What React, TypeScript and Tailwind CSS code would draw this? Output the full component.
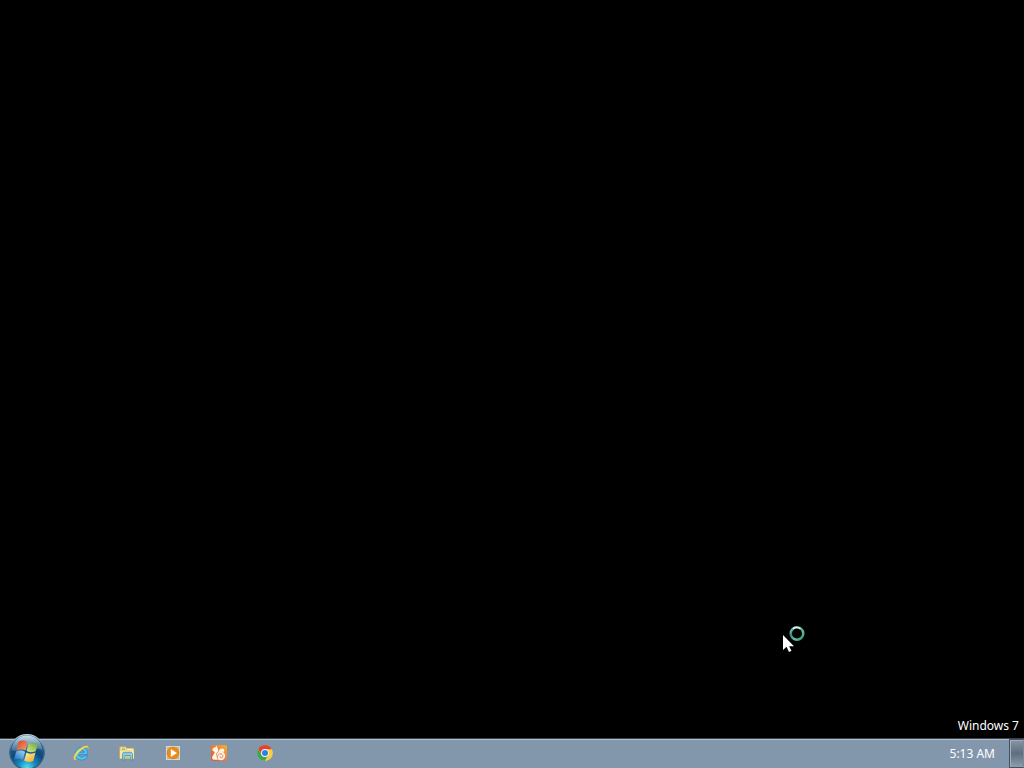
import type { ReactNode } from "react";

function StartOrb() {
  return (
    <svg viewBox="0 0 36 36" className="size-9" aria-hidden="true">
      <defs>
        <radialGradient id="orb" cx="50%" cy="95%" r="85%">
          <stop offset="0" stopColor="#4fe0f4" />
          <stop offset="0.3" stopColor="#1888bd" />
          <stop offset="0.6" stopColor="#10497c" />
          <stop offset="1" stopColor="#35648f" />
        </radialGradient>
        <linearGradient id="gloss" x1="0" y1="0" x2="0" y2="1">
          <stop offset="0" stopColor="#dcebf4" stopOpacity="0.9" />
          <stop offset="1" stopColor="#8fb4cd" stopOpacity="0.3" />
        </linearGradient>
        <linearGradient id="rim" x1="0" y1="0" x2="0" y2="1">
          <stop offset="0" stopColor="#b9cedb" />
          <stop offset="0.5" stopColor="#3d6486" />
          <stop offset="1" stopColor="#285f83" />
        </linearGradient>
        <linearGradient id="red" x1="0" y1="0" x2="1" y2="1">
          <stop offset="0" stopColor="#d9421c" />
          <stop offset="1" stopColor="#f5a06a" />
        </linearGradient>
        <linearGradient id="green" x1="1" y1="0" x2="0" y2="1">
          <stop offset="0" stopColor="#69a92f" />
          <stop offset="1" stopColor="#d5e88a" />
        </linearGradient>
        <linearGradient id="blue" x1="0" y1="1" x2="1" y2="0">
          <stop offset="0" stopColor="#1d69b8" />
          <stop offset="1" stopColor="#a2ddf5" />
        </linearGradient>
        <linearGradient id="yellow" x1="1" y1="1" x2="0" y2="0">
          <stop offset="0" stopColor="#f2a51e" />
          <stop offset="1" stopColor="#fff3a0" />
        </linearGradient>
      </defs>
      <circle cx="18" cy="18" r="17.3" fill="url(#orb)" stroke="url(#rim)" strokeWidth="1.2" />
      <path d="M2.5 16C3.2 7.5 10 1.5 18 1.5s14.800 6 15.500 14.500C24 12 14 20 2.500 16Z" fill="url(#gloss)" />
      <path d="M9.500 7.800c3.300-1.700 6.300-1.600 8.900.1l-1.900 8.500c-2.900-1.600-5.700-1.600-9-.1Z" fill="url(#red)" />
      <path d="M19.700 8.700c3.200 1.700 6 1.700 9.400.1l-2.300 8.500c-3.300 1.500-6.100 1.400-9.100-.2Z" fill="url(#green)" />
      <path d="M7.100 17.600c3.300-1.500 6-1.400 9 .1l-2.200 8.100c-2.700-1.500-5.500-1.600-8.900 0Z" fill="url(#blue)" />
      <path d="M17.400 18.500c3.100 1.600 5.900 1.700 9.100.1l-2.200 8.300c-3.300 1.500-6.100 1.400-9.100-.3Z" fill="url(#yellow)" />
    </svg>
  );
}

function ExplorerIcon() {
  return (
    <svg viewBox="0 0 16 16" className="size-4" aria-hidden="true">
      <path d="M14.700 9.400H5.600c.2 1.800 1.300 2.700 3 2.700 1.200 0 2-.4 2.600-1.300h3.200c-.8 2.700-2.900 4.200-5.900 4.200-3.900 0-6.300-2.400-6.300-6.200S4.700 2.500 8.600 2.500s6.300 2.500 6.100 6.900ZM5.700 7.300h5.600c-.2-1.400-1.200-2.200-2.700-2.200s-2.600.8-2.900 2.200Z" fill="#52c4f5" stroke="#237fbd" strokeWidth="0.6" />
      <path d="M3.200 14.800C-.2 16-.2 11.600 3.200 7.300 7 2.600 12.700-.3 14.800 1c1 .7.8 2 .3 3.300 0-1.600-.6-2.200-2.300-1.700C9.700 3.600 4.900 7.800 3 11.200c-1 1.900-.9 3.200.9 2.700Z" fill="#f3df59" stroke="#b9a93f" strokeWidth="0.3" />
    </svg>
  );
}

function FolderIcon() {
  return (
    <svg viewBox="0 0 16 16" className="size-4" aria-hidden="true">
      <path d="M.5 13.500v-11l1-1h5l1 1.500h7.500v10.500Z" fill="#e7cf79" stroke="#baa45c" strokeWidth="0.6" />
      <path d="M2 3.500h5M8 4.500h6" stroke="#fff8cf" />
      <path d="M3 4h3" stroke="#66a958" />
      <path d="M1 5.500h14v8H1Z" fill="#f6e7a4" />
      <path d="M3.500 15V9.500c0-1.500.7-2.200 2-2.200h6c1.300 0 2 .7 2 2.200V15h-2.300v-4.500H5.800V15Z" fill="#8dcbea" stroke="#3f86a8" strokeWidth="0.7" />
      <path d="M6.500 11.300h4V14h-4Z" fill="#c9c06e" />
    </svg>
  );
}

function MediaIcon() {
  return (
    <svg viewBox="0 0 16 16" className="size-4" aria-hidden="true">
      <path d="M1 1h14v14H1Z" fill="#c4dfe8" />
      <path d="M2 2h12v12H2Z" fill="#e6b066" />
      <circle cx="8" cy="8" r="5.800" fill="#ed8b17" stroke="#d8760f" strokeWidth="0.7" />
      <path d="m5.800 4 6.200 4-6.200 4Z" fill="#fff" />
    </svg>
  );
}

function SquirrelIcon() {
  return (
    <svg viewBox="0 0 16 16" className="size-4" aria-hidden="true">
      <defs>
        <linearGradient id="squirrel" x1="0" y1="1" x2="1" y2="0">
          <stop offset="0" stopColor="#e2552a" />
          <stop offset="0.5" stopColor="#ee7a3a" />
          <stop offset="1" stopColor="#f9b32c" />
        </linearGradient>
      </defs>
      <rect width="16" height="16" rx="2" fill="url(#squirrel)" />
      <path d="M1.300 5.200C1.500 3.400 2.800 2.300 4.500 2.300L5.800.8l.7 2.400c1.100 1.300.9 2.900-.1 4.100C5.400 8.500 4.700 9.300 5 10.500L7 14.800H3.200c-1.800 0-2.700-1.800-1.800-3.500L3.800 7.700 3 6.500Z" fill="#fff5e9" />
      <circle cx="9.800" cy="10.800" r="4.400" fill="#fff5e9" />
      <path d="M7.500 8c0-3 1.700-4.700 3.800-4.500 1.700.2 2.500 1.800 1.700 3-.5.800-1.500.7-1.900.1-.7 1 .3 1.900 1.400 2.100Z" fill="#fff5e9" />
      <path d="M6.700 13.500c-1-2.700.9-5 3.200-4.600 2.400.4 2.700 3.500.7 4-1.400.3-2.200-1.100-1.200-1.900" fill="none" stroke="#e96a38" strokeWidth="0.9" />
    </svg>
  );
}

function ChromeIcon() {
  return (
    <svg viewBox="0 0 16 16" className="size-4" aria-hidden="true">
      <circle cx="8" cy="8" r="7.900" fill="#f8cf43" />
      <path d="M1.100 4.100A7.900 7.900 0 0 1 14.900 4.200H8A3.800 3.800 0 0 0 4.700 9.900Z" fill="#dc4639" />
      <path d="M1.100 4.100A7.900 7.900 0 0 0 7.700 15.900l3.600-6a3.800 3.800 0 0 1-6.600 0Z" fill="#3aa55b" />
      <circle cx="8" cy="8" r="3.900" fill="#f4f7fa" />
      <circle cx="8" cy="8" r="3" fill="#347fd7" />
    </svg>
  );
}

const pinned: { name: string; icon: ReactNode }[] = [
  { name: "Internet Explorer", icon: <ExplorerIcon /> },
  { name: "Windows Explorer", icon: <FolderIcon /> },
  { name: "Windows Media Player", icon: <MediaIcon /> },
  { name: "UC Browser", icon: <SquirrelIcon /> },
  { name: "Google Chrome", icon: <ChromeIcon /> },
];

function BusyCursor() {
  return (
    <svg viewBox="0 0 24 28" className="absolute right-[218px] bottom-[116px] h-7 w-6" aria-hidden="true">
      <defs>
        <linearGradient id="busy" x1="0" y1="0" x2="1" y2="1">
          <stop offset="0" stopColor="#a4ddd3" />
          <stop offset="0.3" stopColor="#328b7a" />
          <stop offset="0.65" stopColor="#64bca2" />
          <stop offset="1" stopColor="#2d8b75" />
        </linearGradient>
      </defs>
      <path d="M1 11v15l3.500-3.200L7 28l2.500-1.200-2.400-4.600H12Z" fill="#fff" />
      <circle cx="15" cy="9.500" r="6.300" fill="none" stroke="url(#busy)" strokeWidth="2.500" />
      <path d="M11 4.700a6.300 6.300 0 0 1 7.500 0" fill="none" stroke="#e2f5ef" strokeWidth="1.700" />
    </svg>
  );
}

export default function App() {
  return (
    <div className="relative flex min-h-screen flex-col overflow-hidden bg-black font-['Noto_Sans','Open_Sans',sans-serif] text-xs text-white">
      <main className="flex flex-1 items-end justify-end px-[5px] pb-1">
        <p className="leading-4">Windows 7</p>
        <BusyCursor />
      </main>
      <footer className="flex h-[30px] items-stretch border-t border-[#3a444f] bg-[#8297ab] shadow-[inset_0_1px_0_#b3bfca]">
        <button type="button" aria-label="Start" className="-mt-[5px] ml-[9px] flex size-9 shrink-0 rounded-full">
          <StartOrb />
        </button>
        <nav aria-label="Pinned programs" className="ml-[13px] flex pb-px">
          {pinned.map(({ name, icon }) => (
            <button key={name} type="button" aria-label={name} className="flex w-[46px] items-center justify-center">
              {icon}
            </button>
          ))}
        </nav>
        <div className="ml-auto flex items-center gap-3.5">
          <time dateTime="05:13">5:13 AM</time>
          <button
            type="button"
            aria-label="Show desktop"
            className="h-full w-[15px] border border-[#46515f] border-r-[#7b8896] bg-linear-to-b from-[#8796a6] via-[#5f6e80] to-[#8e9dae] shadow-[inset_1px_1px_0_#a2b0bd]"
          />
        </div>
      </footer>
    </div>
  );
}
